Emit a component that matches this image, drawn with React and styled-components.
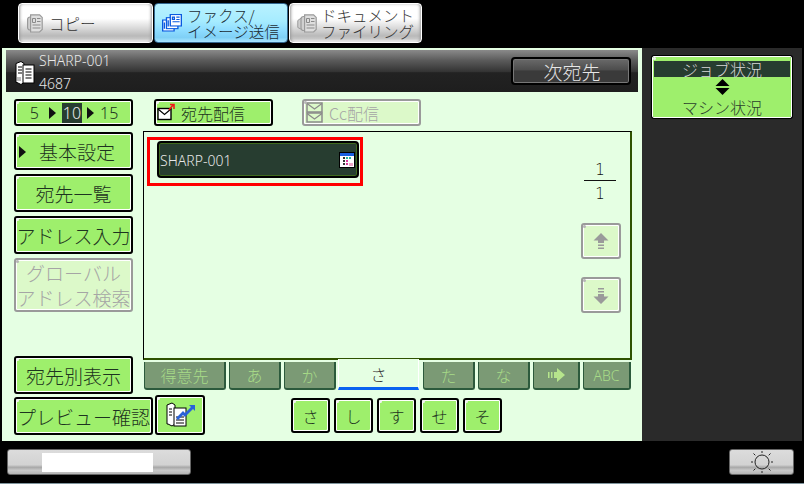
import React from 'react';
import styled, { createGlobalStyle, css } from 'styled-components';

const GlobalStyle = createGlobalStyle`
  html, body {
    margin: 0;
    padding: 0;
    width: 804px;
    height: 484px;
    background: #000;
    overflow: hidden;
  }
`;

const jp = `'Noto Sans CJK JP', 'Noto Sans', sans-serif`;
const latin = `'Noto Sans', 'Noto Sans CJK JP', sans-serif`;

const Screen = styled.div`
  width: 804px;
  height: 484px;
  display: flex;
  flex-direction: column;
  background: #000;
  font-family: ${jp};
  font-weight: 300;
  color: #1c2c1c;
`;

/* 上部モードタブ */
const ModeBar = styled.div`
  height: 48px;
  box-sizing: border-box;
  padding: 3px 0 0 18px;
  display: flex;
  gap: 1px;
`;

const ModeTab = styled.div`
  width: ${({ $w }) => $w}px;
  height: 40px;
  box-sizing: border-box;
  display: flex;
  align-items: center;
  gap: ${({ $gap }) => $gap || 3}px;
  padding-left: ${({ $pl }) => $pl || 6}px;
  border-radius: 4px;
  border: 1px solid #fff;
  font-size: 15.5px;
  color: #333;
  box-shadow: inset 3px 0 3px -2px #999, inset -3px 0 3px -2px #999;
  background: linear-gradient(#ededed 0, #fff 8%, #fff 38%, #dcdcdc 62%, #b9b9b9 84%, #c8c8c8 92%, #f4f4f4 100%);
  ${({ $active }) =>
    $active &&
    css`
      border: 1px solid #33678f;
      color: #1c2c34;
      box-shadow: none;
      background: linear-gradient(#b9f2ff 0, #a6ecff 45%, #8edcff 70%, #7fd0f6 88%, #a9e6ff 100%);
    `}
`;

const TabLines = styled.div`
  display: flex;
  flex-direction: column;
  white-space: nowrap;
`;

const TabLine = styled.div`
  height: 16px;
  line-height: 16px;
`;

const Body = styled.div`
  display: flex;
  height: 393px;
`;

const MainPanel = styled.div`
  width: 640px;
  margin-left: 2px;
  box-sizing: border-box;
  padding: 2px 4px 0;
  background: #e5ffe3;
  display: flex;
  flex-direction: column;
`;

const TitleBar = styled.div`
  height: 42px;
  flex: none;
  box-sizing: border-box;
  padding: 0 7px 0 9px;
  display: flex;
  align-items: center;
  color: #e8e8e8;
  background: linear-gradient(#8a8a8a 0, #5a5a5a 25%, #333 52%, #222 54%, #1e1e1e 100%);
`;

const TitleText = styled.div`
  margin-left: 4px;
  font-family: ${latin};
  font-size: 14px;
  line-height: 23px;
  flex: 1;
  padding-top: 1px;
`;

const TitleIcon = styled.div`
  display: flex;
  margin-top: 3px;
`;

const NextButton = styled.div`
  width: 120px;
  height: 28px;
  box-sizing: border-box;
  border: 2px solid #000;
  border-radius: 4px;
  box-shadow: inset 0 0 0 1px #777;
  background: linear-gradient(#6a6a6a 0, #4d4d4d 45%, #3a3a3a 50%, #3a3a3a 100%);
  display: flex;
  align-items: center;
  justify-content: center;
  font-size: 19px;
  color: #e6e6e6;
  padding-left: 2px;
`;

const Content = styled.div`
  flex: 1;
  padding: 7px 0 0 8px;
  display: flex;
  flex-direction: column;
`;

const TopRow = styled.div`
  display: flex;
  height: 27px;
`;

const MiddleRow = styled.div`
  display: flex;
  margin-top: 5px;
  height: 263px;
`;

const BottomRow = styled.div`
  display: flex;
  margin-top: 3px;
`;

/* 緑のハードボタン共通 */
const Btn = styled.div`
  position: relative;
  flex: none;
  width: ${({ $w }) => $w || 119}px;
  height: ${({ $h }) => $h || 38}px;
  box-sizing: border-box;
  border: 2px solid #000;
  border-radius: 3px;
  box-shadow: inset -1px -1px 0 #fff, inset 1px 1px 0 #fff;
  background: #9eef6c;
  display: flex;
  align-items: center;
  justify-content: center;
  font-size: ${({ $fs }) => $fs || 19}px;
  line-height: 1;
  color: #1d3320;
  white-space: nowrap;
  &::before {
    content: '';
    position: absolute;
    left: 0;
    top: 0;
    width: 3px;
    height: 3px;
    border-radius: 50%;
    background: #f2f2f2;
  }
  ${({ $off }) =>
    $off &&
    css`
      border-color: #9a9a9a;
      background: #dcf9c9;
      color: #a5a5a5;
      &::before {
        background: #b5b5b5;
      }
    `}
`;

const RangeNum = styled.span`
  font-family: ${latin};
  font-size: 16px;
  line-height: 20px;
  ${({ $on }) =>
    $on &&
    css`
      padding: 0 1px;
      background: #273d30;
      color: #e8e8e8;
    `}
`;

const RangeInner = styled.div`
  display: flex;
  align-items: center;
  padding-left: 1px;
`;

const Triangle = styled.span`
  width: 0;
  height: 0;
  border-style: solid;
  border-width: 6px 0 6px 7px;
  border-color: transparent transparent transparent #111;
  margin: 0 ${({ $mr }) => $mr || 0}px 0 ${({ $ml }) => $ml || 0}px;
`;

const SendBtn = styled(Btn)`
  margin-left: ${({ $ml }) => $ml}px;
  gap: ${({ $gap }) => $gap}px;
  justify-content: flex-start;
  padding-left: ${({ $pl }) => $pl}px;
`;

const SideColumn = styled.div`
  width: 119px;
  flex: none;
  padding-top: 1px;
  display: flex;
  flex-direction: column;
  gap: 4px;
`;

const SideBtn = styled(Btn)`
  ${({ $bottom }) => $bottom && 'margin-top: auto;'}
`;

const BasicMark = styled(Triangle)`
  position: absolute;
  left: 3px;
  top: 12px;
`;

const BasicLabel = styled.span`
  margin-left: 7px;
`;

const TwoLine = styled.div`
  display: flex;
  flex-direction: column;
  align-items: center;
  line-height: 25px;
`;

const ListColumn = styled.div`
  margin-left: 10px;
  width: 489px;
  display: flex;
  flex-direction: column;
`;

const ListPanel = styled.div`
  height: 229px;
  flex: none;
  box-sizing: border-box;
  border-left: 1px solid #000;
  border-top: 1px solid #000;
  border-right: 2px solid #2f5200;
  border-bottom: 2px solid #2f5200;
  display: flex;
  justify-content: space-between;
`;

const RedFrame = styled.div`
  margin: 5px 0 0 3px;
  width: 216px;
  height: 49px;
  box-sizing: border-box;
  border: 3px solid #f00;
  padding: 1px 0 0 7px;
`;

const DestChip = styled.div`
  width: 202px;
  height: 37px;
  box-sizing: border-box;
  border: 2px solid #000;
  border-radius: 4px;
  box-shadow: inset 0 0 0 1px #3f6a1e;
  background: #273d30;
  display: flex;
  align-items: center;
  justify-content: space-between;
  padding: 1px 2px 0 1px;
  font-family: ${latin};
  font-size: 14px;
  color: #e6e6e6;
`;

const Pager = styled.div`
  width: 40px;
  margin-right: 9px;
  padding-top: 28px;
  display: flex;
  flex-direction: column;
  align-items: center;
`;

const PageNum = styled.div`
  font-family: 'DejaVu Sans', sans-serif;
  font-size: 15px;
  line-height: 20px;
  color: #111;
  width: 32px;
  text-align: center;
  margin-right: 2px;
  ${({ $top }) => $top && 'border-bottom: 1px solid #111; height: 20px; margin-bottom: 3px;'}
`;

const PagerBtn = styled(Btn)`
  margin-top: ${({ $mt }) => $mt}px;
`;

const TabStrip = styled.div`
  display: flex;
  margin-top: 2px;
  margin-left: 1px;
  gap: 3px;
`;

const IndexTab = styled.div`
  width: ${({ $w }) => $w}px;
  height: 28px;
  flex: none;
  box-sizing: border-box;
  border-right: 2px solid #2c5a3c;
  border-bottom: 2px solid #2c5a3c;
  border-left: 1px solid #2c5a3c;
  border-radius: 0 0 3px 3px;
  background: #7b9a75;
  color: #a8dc88;
  display: flex;
  align-items: center;
  justify-content: center;
  font-size: 16px;
  ${({ $active }) =>
    $active &&
    css`
      position: relative;
      width: 81px;
      height: 31px;
      margin: -3px 1px 0 -1px;
      background: #e5ffe3;
      border: none;
      border-bottom: 3px solid #0a62f0;
      border-left: 1px solid #fff;
      border-right: 1px solid #fff;
      color: #333;
      border-radius: 0;
      padding-top: 1px;
    `}
`;

const AbcLabel = styled.span`
  font-family: ${latin};
  font-size: 14px;
`;

const PreviewBtn = styled(Btn)`
  margin: -2px 0 0 2px;
`;

const KanaRow = styled.div`
  display: flex;
  gap: 4px;
  margin: 1px 0 0 86px;
`;

/* 右側のステータス領域 */
const StatusPanel = styled.div`
  width: 160px;
  box-sizing: border-box;
  padding: 7px 0 0 9px;
  background: #2a2a2a;
`;

const StatusBtn = styled.div`
  position: relative;
  width: 142px;
  height: 64px;
  box-sizing: border-box;
  border: 2px solid #000;
  outline: 1px solid #fff;
  outline-offset: -2px;
  border-radius: 3px;
  background: #9eef6c;
  display: flex;
  flex-direction: column;
  align-items: center;
  font-size: 16px;
  color: #2b402c;
  padding: 4px 1px 0;
  &::before {
    content: '';
    position: absolute;
    left: 0;
    top: 0;
    width: 3px;
    height: 3px;
    border-radius: 50%;
    background: #eee;
  }
`;

const StatusTop = styled.div`
  width: 136px;
  height: 16px;
  flex: none;
  background: #273d30;
  color: #d8d8d8;
  display: flex;
  align-items: center;
  justify-content: center;
  line-height: 16px;
`;

const StatusBottom = styled.div`
  line-height: 18px;
  margin-top: 3px;
`;

const Footer = styled.div`
  flex: 1;
  display: flex;
  justify-content: space-between;
  align-items: flex-start;
  padding: 8px 10px 0 7px;
  border-bottom: 1px solid #7f949c;
`;

const GreyBar = styled.div`
  width: ${({ $w }) => $w}px;
  height: 26px;
  box-sizing: border-box;
  border: 1px solid #666;
  border-radius: 3px;
  background: linear-gradient(#dcdcdc 0, #d2d2d2 62%, #a8a8a8 72%, #c8c8c8 85%, #b4b4b4 100%);
  display: flex;
  align-items: center;
  justify-content: center;
`;

const ProgressFill = styled.div`
  width: 111px;
  height: 19px;
  margin-left: -3px;
  background: #fff;
`;

/* ---- アイコン ---- */
const CopyIcon = () => (
  <svg width="16" height="19" viewBox="0 0 16 19" fill="none" style={{ flex: 'none' }}>
    <rect x="0.600" y="3" width="11" height="13" rx="2.500" fill="#d0d0d0" stroke="#9a9a9a" strokeWidth="1.200" />
    <path d="M3.600 0.800h9l2.600 2.600v12l-2.600 2.600h-9z" fill="#dedede" stroke="#9a9a9a" strokeWidth="1.200" />
    <path d="M5.500 4.500h3v4h-3zM10 4.500h3.500M10 7.500h3.500M5.500 11h8M5.500 14h8" stroke="#8a8a8a" />
  </svg>
);

const DocStackIcon = () => (
  <svg width="20" height="19" viewBox="0 0 20 19" fill="none" style={{ flex: 'none' }}>
    <path d="M0.800 6.500l4-3v12l-4-2z" fill="#cfcfcf" stroke="#9a9a9a" />
    <rect x="4" y="2.500" width="11" height="14" rx="2.500" fill="#d0d0d0" stroke="#9a9a9a" strokeWidth="1.200" />
    <path d="M7.600 0.800h9l2.600 2.600v12l-2.600 2.600h-9z" fill="#dedede" stroke="#9a9a9a" strokeWidth="1.200" />
    <path d="M9.500 4.500h3v4h-3zM14 4.500h3.500M14 7.500h3.500M9.500 11h8M9.500 14h8" stroke="#8a8a8a" />
  </svg>
);

const FaxIcon = () => (
  <svg width="20" height="18" viewBox="0 0 21 23" preserveAspectRatio="none" fill="none" style={{ flex: 'none' }}>
    <rect x="0.700" y="7.700" width="12" height="14" fill="#fff" stroke="#0a5ae0" strokeWidth="1.400" />
    <rect x="4.700" y="4.700" width="12" height="14" fill="#fff" stroke="#0a5ae0" strokeWidth="1.400" />
    <rect x="8.700" y="0.700" width="11.600" height="14.600" fill="#fff" stroke="#0a5ae0" strokeWidth="1.400" />
    <path d="M11 4h2v3h-2zM15 4h3.500M15 7h3.500M11 10h7.500M6.500 8v8M2.500 11v8" stroke="#0a5ae0" strokeWidth="1.400" />
  </svg>
);

const BookIcon = () => (
  <svg width="20" height="24" viewBox="0 0 20 24" fill="none" style={{ flex: 'none' }}>
    <path d="M1 2.500l5-2 3 2v19l-3 2-4-2H1z" fill="#fff" stroke="#000" />
    <rect x="8" y="4" width="11" height="18" fill="#fff" stroke="#000" />
    <path d="M3 6h4M3 9h4M3 12h4M10.500 8h6M10.500 11h6M10.500 14h6M10.500 17h6" stroke="#000" />
    <rect x="2" y="16" width="4" height="4" fill="#bbb" />
  </svg>
);

const MailIcon = ({ off }) =>
  off ? (
    <svg width="17" height="21" viewBox="0 0 17 21" fill="none" style={{ flex: 'none' }}>
      <rect x="1" y="1" width="15" height="9" fill="#dcf9c9" stroke="#8a8a8a" strokeWidth="1.500" />
      <rect x="1" y="11" width="15" height="9" fill="#dcf9c9" stroke="#8a8a8a" strokeWidth="1.500" />
      <path d="M1 1.500l7.500 5.500L16 1.500M1 11.500l7.500 5.500 7.500-5.500" stroke="#8a8a8a" strokeWidth="1.200" />
    </svg>
  ) : (
    <svg width="18" height="19" viewBox="0 0 18 19" fill="none" style={{ flex: 'none' }}>
      <rect x="1" y="5.500" width="13" height="11" fill="#fff" stroke="#000" strokeWidth="1.400" />
      <path d="M1 6l6.500 5.500L14 6" stroke="#000" strokeWidth="1.200" />
      <path d="M12 7l4-5M13 1.500h4V6" stroke="#f01818" strokeWidth="1.600" />
    </svg>
  );

const CalendarIcon = () => (
  <svg width="16" height="16" viewBox="0 0 16 16" style={{ flex: 'none' }}>
    <rect x="0.500" y="0.500" width="15" height="15" fill="#fff" stroke="#000" />
    <rect x="1" y="1" width="14" height="3" fill="#1a5fe0" />
    <path d="M4 5h2v2H4zM4 8h2v2H4zM4 11h2v2H4z" fill="#333" />
    <path d="M7 5h2v2H7zM10 5h2v2h-2z" fill="#27b5a0" />
    <path d="M7 8h2v2H7zM7 11h2v2H7z" fill="#d8379a" />
    <path d="M10 11h4v3h-4z" fill="#f0a6c8" />
  </svg>
);

const SwapArrows = () => (
  <svg width="15" height="16" viewBox="0 0 15 16" style={{ marginTop: 2, flex: 'none' }}>
    <path d="M7.500 0l7 7H.5z" fill="#000" />
    <path d="M.5 9h14l-7 7z" fill="#000" />
  </svg>
);

const UpArrow = ({ down }) => (
  <svg
    width="16"
    height="17"
    viewBox="0 0 16 17"
    style={down ? { transform: 'rotate(180deg)' } : undefined}
  >
    <path d="M8 0l7.500 7.500H11V10H5V7.500H.5z" fill="#9a9a9a" />
    <path d="M5 11.500h6V13H5zM5 14.500h6V16H5z" fill="#9a9a9a" />
  </svg>
);

const RightArrow = () => (
  <svg width="17" height="14" viewBox="0 0 17 14">
    <path d="M0 4h1.500v6H0zM3 4h1.500v6H3zM6 4h3V0l8 7-8 7v-4H6z" fill="#b6e58c" />
  </svg>
);

const PreviewIcon = () => (
  <svg width="30" height="26" viewBox="0 0 30 26" fill="none">
    <path d="M2 3l5-2 3 2v19l-3 2-4-2H2z" fill="#fff" stroke="#000" />
    <rect x="9" y="6" width="12" height="18" fill="#fff" stroke="#000" />
    <path d="M4 7h3M4 10h3M4 13h3M11 15h8M11 18h8M11 21h8" stroke="#000" />
    <path d="M11 16l7-7 2 2 6-6-2-2h6v6l-2-2-8 8-2-2-5 5z" fill="#2a62d8" />
  </svg>
);

const SunIcon = () => (
  <svg width="22" height="22" viewBox="0 0 22 22" fill="none" stroke="#222" strokeWidth="1">
    <circle cx="11" cy="11" r="7" />
    <path d="M11 0v2M11 20v2M0 11h2M20 11h2M2.500 2.500l1.800 1.800M17.700 17.700l1.800 1.800M19.500 2.500l-1.800 1.800M4.300 17.700l-1.800 1.800" />
  </svg>
);

const tabs = [
  { label: '得意先', w: 82 },
  { label: 'あ', w: 52 },
  { label: 'か', w: 52 },
  { label: 'さ', w: 81, active: true },
  { label: 'た', w: 52 },
  { label: 'な', w: 52 },
  { label: <RightArrow />, w: 47 },
  { label: <AbcLabel>ABC</AbcLabel>, w: 48 },
];

const kana = ['さ', 'し', 'す', 'せ', 'そ'];

const App = () => (
  <Screen>
    <GlobalStyle />
    <ModeBar>
      <ModeTab $w={135} $gap={6} $pl={8}>
        <CopyIcon />
        コピー
      </ModeTab>
      <ModeTab $w={134} $active $gap={5} $pl={7}>
        <FaxIcon />
        <TabLines>
          <TabLine>ファクス/</TabLine>
          <TabLine>イメージ送信</TabLine>
        </TabLines>
      </ModeTab>
      <ModeTab $w={133} $gap={4} $pl={7}>
        <DocStackIcon />
        <TabLines>
          <TabLine>ドキュメント</TabLine>
          <TabLine>ファイリング</TabLine>
        </TabLines>
      </ModeTab>
    </ModeBar>

    <Body>
      <MainPanel>
        <TitleBar>
          <TitleIcon>
            <BookIcon />
          </TitleIcon>
          <TitleText>
            SHARP-001
            <br />
            4687
          </TitleText>
          <NextButton>次宛先</NextButton>
        </TitleBar>

        <Content>
          <TopRow>
            <Btn $h={27}>
              <RangeInner>
                <RangeNum>5</RangeNum>
                <Triangle $ml={10} $mr={6} />
                <RangeNum $on>10</RangeNum>
                <Triangle $ml={5} $mr={6} />
                <RangeNum>15</RangeNum>
              </RangeInner>
            </Btn>
            <SendBtn $h={27} $ml={21} $fs={16} $gap={6} $pl={1}>
              <MailIcon />
              宛先配信
            </SendBtn>
            <SendBtn $h={27} $ml={29} $fs={16} $gap={6} $pl={2} $off>
              <MailIcon off />
              Cc配信
            </SendBtn>
          </TopRow>

          <MiddleRow>
            <SideColumn>
              <SideBtn>
                <BasicMark />
                <BasicLabel>基本設定</BasicLabel>
              </SideBtn>
              <SideBtn>宛先一覧</SideBtn>
              <SideBtn>アドレス入力</SideBtn>
              <SideBtn $h={54} $off>
                <TwoLine>
                  <span>グローバル</span>
                  <span>アドレス検索</span>
                </TwoLine>
              </SideBtn>
              <SideBtn $bottom>宛先別表示</SideBtn>
            </SideColumn>

            <ListColumn>
              <ListPanel>
                <RedFrame>
                  <DestChip>
                    SHARP-001
                    <CalendarIcon />
                  </DestChip>
                </RedFrame>
                <Pager>
                  <PageNum $top>1</PageNum>
                  <PageNum>1</PageNum>
                  <PagerBtn $w={40} $h={36} $mt={19} $off>
                    <UpArrow />
                  </PagerBtn>
                  <PagerBtn $w={40} $h={36} $mt={18} $off>
                    <UpArrow down />
                  </PagerBtn>
                </Pager>
              </ListPanel>
              <TabStrip>
                {tabs.map((t, i) => (
                  <IndexTab key={i} $w={t.w} $active={t.active}>
                    {t.label}
                  </IndexTab>
                ))}
              </TabStrip>
            </ListColumn>
          </MiddleRow>

          <BottomRow>
            <Btn $w={139}>プレビュー確認</Btn>
            <PreviewBtn $w={50} $h={40}>
              <PreviewIcon />
            </PreviewBtn>
            <KanaRow>
              {kana.map((k) => (
                <Btn key={k} $w={39} $h={35} $fs={16}>
                  {k}
                </Btn>
              ))}
            </KanaRow>
          </BottomRow>
        </Content>
      </MainPanel>

      <StatusPanel>
        <StatusBtn>
          <StatusTop>ジョブ状況</StatusTop>
          <SwapArrows />
          <StatusBottom>マシン状況</StatusBottom>
        </StatusBtn>
      </StatusPanel>
    </Body>

    <Footer>
      <GreyBar $w={184}>
        <ProgressFill />
      </GreyBar>
      <GreyBar $w={65}>
        <SunIcon />
      </GreyBar>
    </Footer>
  </Screen>
);

export default App;
